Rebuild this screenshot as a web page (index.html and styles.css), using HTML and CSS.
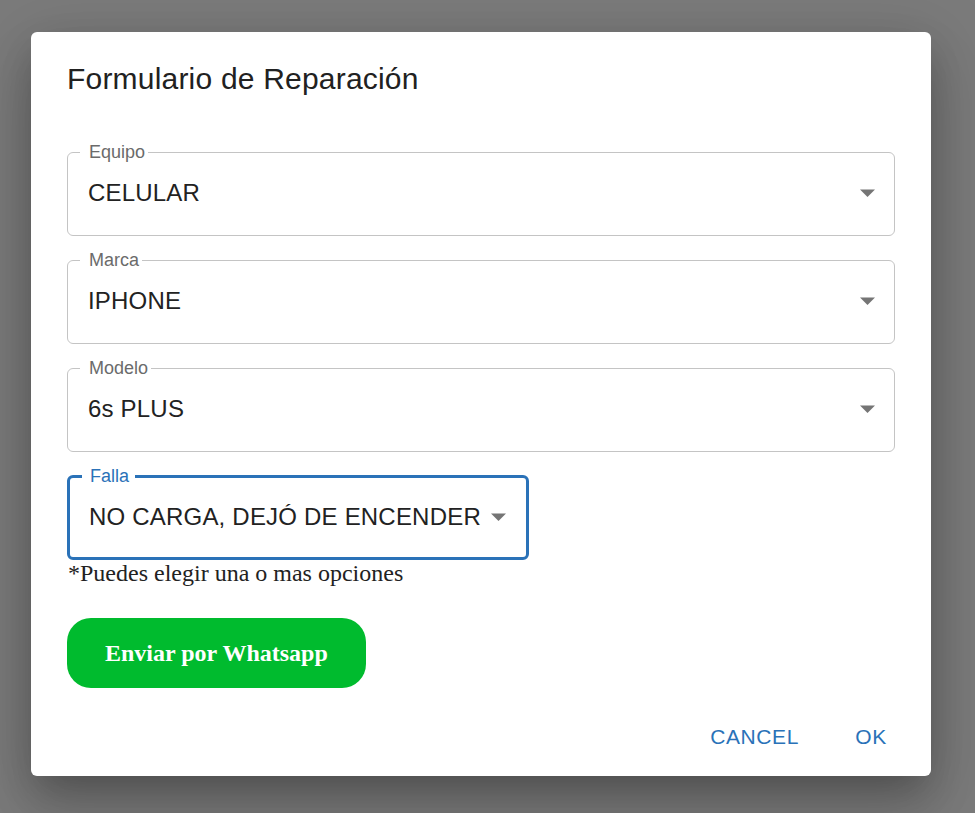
FILE: index.html
```html
<!DOCTYPE html>
<html lang="es">
<head>
<meta charset="utf-8">
<title>Formulario de Reparación</title>
<link rel="stylesheet" href="styles.css">
</head>
<body>
<div class="backdrop">
  <div class="dialog" role="dialog">
    <h2 class="dialog-title">Formulario de Reparación</h2>
    <div class="dialog-content">
      <fieldset class="field">
        <legend class="field-label">Equipo</legend>
        <div class="select">
          <span class="select-value">CELULAR</span>
          <svg class="arrow" width="15" height="8" viewBox="0 0 15 8"><path d="M0 0.5h15L7.5 8z" fill="#757575"/></svg>
        </div>
      </fieldset>
      <fieldset class="field">
        <legend class="field-label">Marca</legend>
        <div class="select">
          <span class="select-value">IPHONE</span>
          <svg class="arrow" width="15" height="8" viewBox="0 0 15 8"><path d="M0 0.5h15L7.5 8z" fill="#757575"/></svg>
        </div>
      </fieldset>
      <fieldset class="field">
        <legend class="field-label">Modelo</legend>
        <div class="select">
          <span class="select-value">6s PLUS</span>
          <svg class="arrow" width="15" height="8" viewBox="0 0 15 8"><path d="M0 0.5h15L7.5 8z" fill="#757575"/></svg>
        </div>
      </fieldset>
      <fieldset class="field field-focused">
        <legend class="field-label">Falla</legend>
        <div class="select">
          <span class="select-value">NO CARGA, DEJÓ DE ENCENDER</span>
          <svg class="arrow" width="15" height="8" viewBox="0 0 15 8"><path d="M0 0.5h15L7.5 8z" fill="#757575"/></svg>
        </div>
      </fieldset>
      <p class="helper">*Puedes elegir una o mas opciones</p>
      <button class="whatsapp-btn" type="button">Enviar por Whatsapp</button>
    </div>
    <div class="dialog-actions">
      <button class="text-btn" type="button">Cancel</button>
      <button class="text-btn" type="button">Ok</button>
    </div>
  </div>
</div>
</body>
</html>
```

FILE: styles.css
```css
html, body {
  margin: 0;
  padding: 0;
  height: 100%;
}

body {
  background: #7b7b7b;
  font-family: "Liberation Sans", Arial, sans-serif;
  overflow: hidden;
}

.backdrop {
  padding: 32px 0 0 31px;
}

.dialog {
  width: 900px;
  box-sizing: border-box;
  background: #ffffff;
  border-radius: 6px;
  box-shadow: 0 16px 34px -8px rgba(0, 0, 0, 0.22),
              0 34px 56px 4px rgba(0, 0, 0, 0.12),
              0 12px 68px 12px rgba(0, 0, 0, 0.10);
  display: flex;
  flex-direction: column;
}

.dialog-title {
  margin: 0;
  padding: 23px 36px 0;
  font-size: 30px;
  line-height: 48px;
  font-weight: 400;
  letter-spacing: 0.2px;
  color: #212121;
}

.dialog-content {
  padding: 40px 36px 0;
  display: flex;
  flex-direction: column;
  align-items: flex-start;
}

.field {
  margin: 0 0 15px;
  padding: 0 19px 0 20px;
  border: 1px solid #c4c4c4;
  border-radius: 6px;
  width: 828px;
  box-sizing: border-box;
  min-inline-size: 0;
}

.field-label {
  margin-left: -8px;
  padding: 0 3px 0 9px;
  font-size: 18px;
  line-height: 18px;
  color: #6b6b6b;
}

.select {
  display: flex;
  align-items: center;
  height: 74px;
  padding-bottom: 10px;
  box-sizing: border-box;
}

.select-value {
  flex: 1;
  font-size: 24px;
  line-height: 30px;
  letter-spacing: 0.2px;
  color: #222222;
  white-space: nowrap;
}

.arrow {
  flex: none;
  display: block;
}

.field-focused {
  margin-top: 0;
  margin-bottom: 0;
  width: 462px;
  border: 3px solid #2a72b8;
  padding: 0 22px 0 19px;
}

.field-focused .field-label {
  color: #2a72b8;
  margin-left: -7px;
  padding: 0 6px 0 8px;
}

.field-focused .select {
  height: 72px;
  padding-bottom: 9px;
}

.field-focused .arrow {
  margin-left: 10px;
}

.helper {
  margin: 0 0 0 1px;
  font-family: "Liberation Serif", "Times New Roman", serif;
  font-size: 24px;
  line-height: 26px;
  color: #222222;
}

.whatsapp-btn {
  margin-top: 32px;
  height: 70px;
  padding: 0 38px;
  border: none;
  border-radius: 24px;
  background: #00bb2e;
  color: #ffffff;
  font-family: "Liberation Serif", "Times New Roman", serif;
  font-weight: 700;
  font-size: 24px;
  cursor: pointer;
}

.dialog-actions {
  margin-top: 10px;
  padding: 12px;
  display: flex;
  justify-content: flex-end;
  gap: 12px;
}

.text-btn {
  min-width: 96px;
  padding: 9px 12px;
  border: none;
  background: transparent;
  font-family: "Liberation Sans", Arial, sans-serif;
  font-size: 21px;
  line-height: 36px;
  letter-spacing: 0.6px;
  text-transform: uppercase;
  color: #2a72b8;
  border-radius: 6px;
  cursor: pointer;
}
```
